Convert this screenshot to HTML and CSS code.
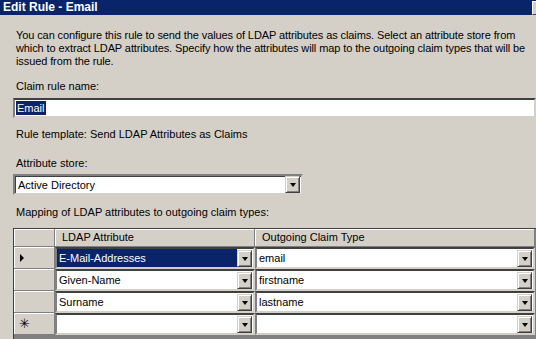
FILE: index.html
```
<!DOCTYPE html>
<html lang="en">
<head>
    <meta charset="UTF-8">
    <title>Edit Rule - Email</title>
    <link rel="stylesheet" href="styles.css">
</head>
<body>
    <div class="dialog">
        <div class="titlebar">
            <span class="title">Edit Rule - Email</span>
            <span class="close"></span>
        </div>
        <div class="content">
            <p class="intro">You can configure this rule to send the values of LDAP attributes as claims. Select an attribute store from which to extract LDAP attributes. Specify how the attributes will map to the outgoing claim types that will be issued from the rule.</p>

            <div class="label label-name">Claim rule name:</div>
            <div class="textbox"><span class="selected-text">Email</span></div>

            <div class="label label-template">Rule template: Send LDAP Attributes as Claims</div>

            <div class="label label-store">Attribute store:</div>
            <div class="combo">
                <span class="combo-text">Active Directory</span>
                <span class="drop-btn"><span class="arrow"></span></span>
            </div>

            <div class="label label-mapping">Mapping of LDAP attributes to outgoing claim types:</div>

            <div class="grid">
                <div class="hdr corner"></div>
                <div class="hdr">LDAP Attribute</div>
                <div class="hdr">Outgoing Claim Type</div>

                <div class="rowhdr"><span class="pointer"></span></div>
                <div class="cell"><span class="cell-text active">E-Mail-Addresses</span><span class="drop-btn"><span class="arrow"></span></span></div>
                <div class="cell"><span class="cell-text">email</span><span class="drop-btn"><span class="arrow"></span></span></div>

                <div class="rowhdr"></div>
                <div class="cell"><span class="cell-text">Given-Name</span><span class="drop-btn"><span class="arrow"></span></span></div>
                <div class="cell"><span class="cell-text">firstname</span><span class="drop-btn"><span class="arrow"></span></span></div>

                <div class="rowhdr"></div>
                <div class="cell"><span class="cell-text">Surname</span><span class="drop-btn"><span class="arrow"></span></span></div>
                <div class="cell"><span class="cell-text">lastname</span><span class="drop-btn"><span class="arrow"></span></span></div>

                <div class="rowhdr newrow">&#10035;</div>
                <div class="cell"><span class="cell-text"></span><span class="drop-btn"><span class="arrow"></span></span></div>
                <div class="cell"><span class="cell-text"></span><span class="drop-btn"><span class="arrow"></span></span></div>
            </div>
        </div>
    </div>
</body>
</html>
```

FILE: styles.css
```
body {
    margin: 0;
    padding: 0;
    overflow: hidden;
    background-color: #d4d0c8;
    font-family: 'Liberation Sans', Arial, sans-serif;
    font-size: 11px;
    color: #000;
}
.dialog {
    width: 536px;
    height: 339px;
    overflow: hidden;
}
/* title bar */
.titlebar {
    height: 15px;
    background-color: #0a246a;
    display: flex;
    justify-content: space-between;
    align-items: flex-start;
}
.title {
    color: #fff;
    font-weight: bold;
    font-size: 12px;
    line-height: 14px;
    padding-left: 3px;
}
.close {
    width: 14px;
    height: 12px;
    margin-top: 1px;
    margin-right: -12px;
    background-color: #d4d0c8;
    border: 1px solid;
    border-color: #fff #404040 #404040 #fff;
}
.content {
    padding: 14px 0 0 13px;
}
.intro {
    margin: 0 0 12px 3px;
    line-height: 13px;
    width: 522px;
    letter-spacing: -0.1px;
}
.label {
    line-height: 13px;
    margin-left: 3px;
}
.label-template { margin-top: 10px; }
.label-store { margin-top: 16px; }
.label-mapping { margin-top: 11px; }
/* text box */
.textbox {
    margin-top: 5px;
    width: 518px;
    height: 16px;
    background: #fff;
    border: 2px solid;
    border-color: #404040 #d4d0c8 #d4d0c8 #808080;
    display: flex;
    align-items: center;
    padding-left: 1px;
}
.selected-text {
    background-color: #0a246a;
    color: #fff;
    line-height: 14px;
    padding: 0 1px;
}
/* combo box */
.combo {
    margin-top: 4px;
    width: 286px;
    height: 17px;
    background: #fff;
    border: 2px solid;
    border-color: #808080 #d4d0c8 #d4d0c8 #808080;
    box-shadow: inset 1px 1px #404040;
    display: flex;
    align-items: center;
    justify-content: space-between;
}
.combo-text {
    padding-left: 3px;
}
.drop-btn {
    width: 13px;
    height: 15px;
    margin-right: 1px;
    background-color: #d4d0c8;
    border: 1px solid;
    border-color: #d4d0c8 #404040 #404040 #d4d0c8;
    box-shadow: inset 1px 1px #fff, inset -1px -1px #808080;
    display: flex;
    align-items: center;
    justify-content: center;
    flex-shrink: 0;
}
.arrow {
    width: 0;
    height: 0;
    border-left: 3px solid transparent;
    border-right: 3px solid transparent;
    border-top: 4px solid #000;
    margin-top: 1px;
}
/* data grid */
.grid {
    margin-top: 9px;
    width: 540px;
    height: 120px;
    display: grid;
    grid-template-columns: 41px 200px 280px;
    grid-template-rows: 18px 22px 22px 22px 22px;
    align-content: start;
    background-color: #808080;
    border-top: 1px solid #404040;
    border-left: 1px solid #404040;
}
.hdr {
    background-color: #d4d0c8;
    border-right: 1px solid #808080;
    border-bottom: 1px solid #808080;
    box-shadow: inset 1px 1px #fff;
    line-height: 16px;
    padding-left: 7px;
}
.hdr.corner {
    padding-left: 0;
}
.rowhdr {
    background-color: #d4d0c8;
    border-right: 1px solid #808080;
    border-bottom: 1px solid #808080;
    box-shadow: inset 1px 1px #fff;
    display: flex;
    align-items: center;
    padding-left: 6px;
}
.pointer {
    width: 0;
    height: 0;
    border-top: 4px solid transparent;
    border-bottom: 4px solid transparent;
    border-left: 4px solid #000;
}
.newrow {
    font-family: 'DejaVu Sans', sans-serif;
    font-size: 13px;
    font-weight: bold;
    color: #000;
    padding-left: 5px;
}
.cell {
    background-color: #fff;
    border: 2px solid;
    border-color: #404040 #d4d0c8 #d4d0c8 #808080;
    display: flex;
    align-items: center;
    justify-content: space-between;
}
.cell-text {
    flex: 1;
    align-self: stretch;
    display: flex;
    align-items: center;
    padding-left: 2px;
}
.cell-text.active {
    background-color: #0a246a;
    color: #fff;
}
```
